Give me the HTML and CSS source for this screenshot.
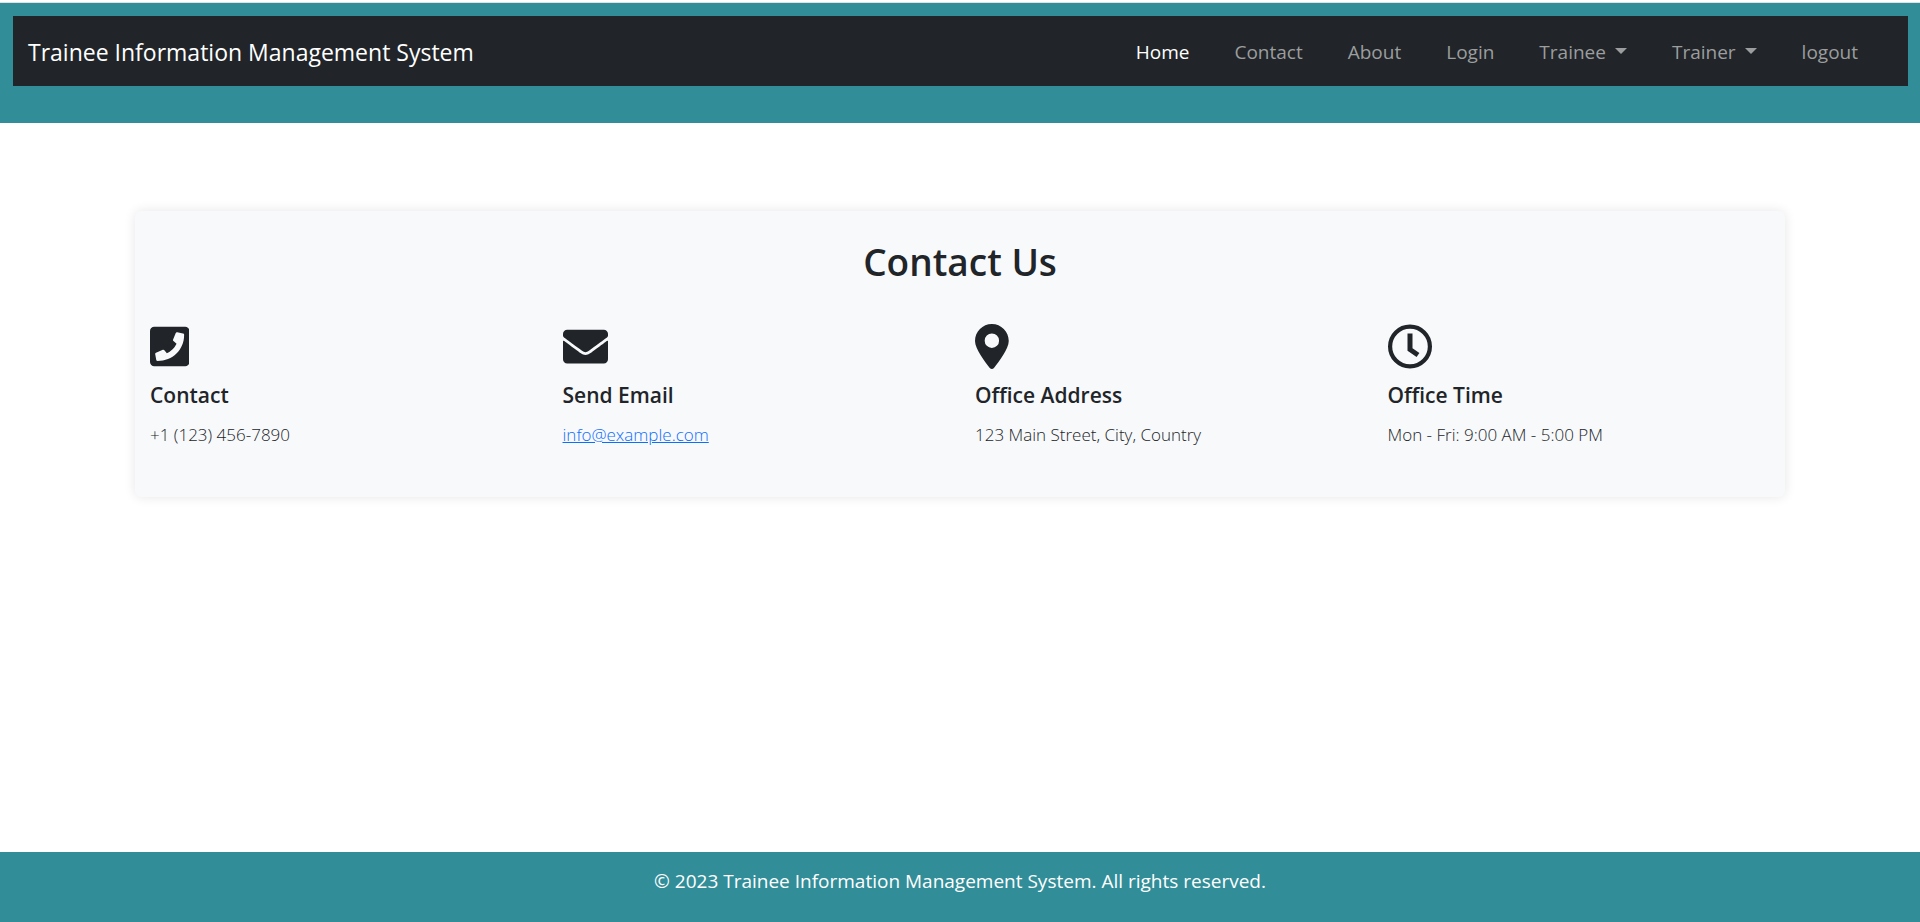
FILE: index.html
```html
<!DOCTYPE html>
<html lang="en">
<head>
<meta charset="utf-8">
<meta name="viewport" content="width=device-width, initial-scale=1">
<title>Contact Us - Trainee Information Management System</title>
<link rel="stylesheet" href="styles.css">
</head>
<body>
<header class="site-header">
  <nav class="navbar" aria-label="Main">
    <a class="brand" href="#">Trainee Information Management System</a>
    <ul class="nav-list">
      <li><a class="nav-link active" href="#">Home</a></li>
      <li><a class="nav-link" href="#">Contact</a></li>
      <li><a class="nav-link" href="#">About</a></li>
      <li><a class="nav-link" href="#">Login</a></li>
      <li><button class="nav-link dropdown" type="button" aria-haspopup="true">Trainee</button></li>
      <li><button class="nav-link dropdown" type="button" aria-haspopup="true">Trainer</button></li>
      <li><a class="nav-link" href="#">logout</a></li>
    </ul>
  </nav>
</header>
<main class="content">
  <section class="card">
    <h2 class="card-title">Contact Us</h2>
    <div class="info-grid">
      <div class="info">
        <svg class="icon" viewBox="0 0 448 512" aria-hidden="true"><path fill-rule="evenodd" d="M400 32H48A48 48 0 0 0 0 80v352a48 48 0 0 0 48 48h352a48 48 0 0 0 48-48V80a48 48 0 0 0-48-48zM86 420a15 15 0 0 1-14.600-11.600l-12-65a15.100 15.100 0 0 1 8.700-17.200l78-32a15 15 0 0 1 17.500 4.300l28 34A226 226 0 0 0 302.300 224.600l-35-30a15 15 0 0 1-4.300-17.500l30-74a15.100 15.100 0 0 1 17.200-8.700l65 15A15 15 0 0 1 388 127c0 164-130 293-302 293z"/></svg>
        <h3 class="info-title">Contact</h3>
        <p class="info-text">+1 (123) 456-7890</p>
      </div>
      <div class="info">
        <svg class="icon" viewBox="0 0 512 512" aria-hidden="true"><path d="M502.300 190.800c3.900-3.100 9.700-.2 9.700 4.700V400c0 26.500-21.500 48-48 48H48c-26.500 0-48-21.500-48-48V195.600c0-5 5.700-7.800 9.700-4.700 22.400 17.400 52.100 39.500 154.100 113.600 21.100 15.400 56.700 47.800 92.200 47.600 35.700.3 72-32.800 92.300-47.600 102-74.100 131.600-96.300 154-113.700zM256 320c23.200.4 56.600-29.200 73.400-41.400 132.700-96.300 142.800-104.700 173.400-128.700 5.800-4.500 9.200-11.500 9.200-18.900v-19c0-26.500-21.500-48-48-48H48c-26.500 0-48 21.500-48 48v19c0 7.400 3.400 14.300 9.200 18.900 30.600 23.900 40.700 32.400 173.400 128.700 16.800 12.200 50.200 41.800 73.400 41.400z"/></svg>
        <h3 class="info-title">Send Email</h3>
        <p class="info-text"><a class="mail-link" href="mailto:info@example.com">info@example.com</a></p>
      </div>
      <div class="info">
        <svg class="icon" viewBox="0 0 384 512" aria-hidden="true"><path fill-rule="evenodd" d="M215.700 499.200C267 435 384 279.400 384 192 384 86 298 0 192 0S0 86 0 192c0 87.400 117 243 168.300 307.200 12.300 15.300 35.100 15.300 47.400 0zM192 108a82 82 0 1 1 0 164 82 82 0 1 1 0-164z"/></svg>
        <h3 class="info-title">Office Address</h3>
        <p class="info-text">123 Main Street, City, Country</p>
      </div>
      <div class="info">
        <svg class="icon" viewBox="0 0 45 45" aria-hidden="true"><circle cx="22" cy="22.500" r="19.900" fill="none" stroke="currentColor" stroke-width="4.200"/><path d="M22 9.500v16l8 5.500" fill="none" stroke="currentColor" stroke-width="5"/></svg>
        <h3 class="info-title">Office Time</h3>
        <p class="info-text">Mon - Fri: 9:00 AM - 5:00 PM</p>
      </div>
    </div>
  </section>
</main>
<footer class="site-footer">
  <p class="copyright">© 2023 Trainee Information Management System. All rights reserved.</p>
</footer>
</body>
</html>
```

FILE: styles.css
```css
* {
  box-sizing: border-box;
}

body {
  margin: 0;
  min-height: 100vh;
  display: flex;
  flex-direction: column;
  font-family: "Segoe UI", "Open Sans", "Noto Sans", sans-serif;
  color: #212529;
  background: #fff;
}

.site-header {
  margin-top: 2px;
  padding: 13px 12px 37px 13px;
  border-top: 1px solid #dee2e6;
  background: #318d98;
}

.navbar {
  display: flex;
  flex-wrap: wrap;
  align-items: center;
  justify-content: space-between;
  min-height: 70px;
  padding: 9px 28px 7px 15px;
  background: #212529;
}

.brand {
  font-size: 23px;
  line-height: 36px;
  color: #fff;
  text-decoration: none;
}

.nav-list {
  display: flex;
  flex-wrap: wrap;
  gap: 1px;
  margin: 0;
  padding: 0;
  list-style: none;
}

.nav-link {
  display: block;
  padding: 8px 22px;
  border: 0;
  background: none;
  font: inherit;
  font-size: 19px;
  line-height: 30px;
  color: #9b9d9e;
  text-decoration: none;
  cursor: pointer;
}

.nav-link.active {
  color: #fff;
}

.dropdown::after {
  content: "";
  display: inline-block;
  margin-left: 9px;
  vertical-align: 5px;
  border-top: 6px solid;
  border-right: 6px solid transparent;
  border-left: 6px solid transparent;
}

.content {
  flex: 1;
  padding: 88px 7% 40px;
}

.card {
  max-width: 1650px;
  margin: 0 auto;
  padding: 27px 0 48px;
  border-radius: 6px;
  background: #f8f9fb;
  box-shadow: 0 0 12px rgba(0, 0, 0, 0.1);
}

.card-title {
  margin: 0 0 38px;
  font-size: 37px;
  line-height: 48px;
  font-weight: 600;
  text-align: center;
}

.info-grid {
  display: grid;
  grid-template-columns: repeat(4, 1fr);
}

.info {
  padding: 0 15px;
}

.icon {
  display: block;
  height: 45px;
  fill: currentColor;
}

.info-title {
  margin: 11px 0;
  font-size: 21px;
  line-height: 30px;
  font-weight: 600;
}

.info-text {
  margin: 0;
  font-size: 17px;
  line-height: 28px;
  font-weight: 300;
}

.mail-link {
  color: #0d6efd;
}

.site-footer {
  min-height: 70px;
  padding: 14px 15px 26px;
  background: #318d98;
  color: #fff;
  text-align: center;
}

.copyright {
  margin: 0;
  font-size: 19px;
  line-height: 30px;
}
```
